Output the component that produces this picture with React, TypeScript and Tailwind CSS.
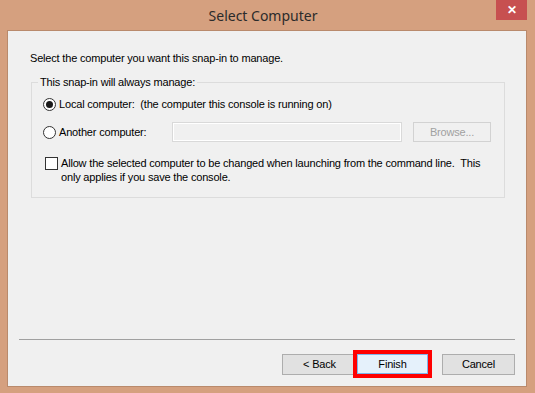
import React from 'react';

const font = { fontFamily: '"Liberation Sans", Arial, sans-serif' };

function Radio({ checked }: { checked?: boolean }) {
  return (
    <span className="flex h-[13px] w-[13px] shrink-0 items-center justify-center rounded-full border border-[#333333] bg-white">
      {checked && <span className="h-[7px] w-[7px] rounded-full bg-[#1a1a1a]" />}
    </span>
  );
}

export default function App() {
  return (
    <div
      className="relative h-[393px] w-[535px] overflow-hidden bg-[#d5a07f] text-[11px] tracking-[-0.18px] text-black"
      style={font}
    >
      {/* title bar */}
      <div className="flex h-[30px] w-[526px] items-center justify-center pt-[1px]">
        <span className="text-[14px] tracking-normal text-[#2b2b2b]" style={{ fontFamily: '"Noto Sans", sans-serif' }}>
          Select Computer
        </span>
      </div>
      <button className="absolute right-[8px] top-0 flex h-[20px] w-[31px] items-center justify-center bg-[#c75050] text-[12px] font-bold leading-none text-white">
        ✕
      </button>

      {/* client area */}
      <div className="ml-[7px] flex h-[357px] w-[520px] flex-col border border-[#b98a6c] bg-[#f0f0f0]">
        <p className="ml-[22px] mt-[19px] leading-[16px]">
          Select the computer you want this snap-in to manage.
        </p>

        <fieldset className="ml-[23px] mt-[8px] w-[474px] border border-[#dcdcdc] pb-[13px] pl-[11px]">
          <legend className="-ml-[5px] px-[2px] leading-[16px]">This snap-in will always manage:</legend>

          <label className="mt-[6px] flex h-[16px] items-center gap-[3px]">
            <Radio checked />
            <span>Local computer:&nbsp; (the computer this console is running on)</span>
          </label>

          <div className="mt-[10px] flex h-[20px] items-center">
            <label className="flex w-[129px] items-center gap-[3px]">
              <Radio />
              <span>Another computer:</span>
            </label>
            <div className="h-[20px] w-[230px] border border-[#d9d9d9] bg-[#f0f0f0] shadow-[inset_0_0_0_1px_#ffffff]" />
            <div className="ml-[11px] flex h-[20px] w-[78px] items-center justify-center border border-[#d2d2d2] bg-[#f0f0f0] text-[#a0a0a0]">
              Browse...
            </div>
          </div>

          <label className="mt-[14px] flex items-start gap-[3px] pl-[2px]">
            <span className="mt-[1px] h-[13px] w-[13px] shrink-0 border border-[#333333] bg-white" />
            <span className="whitespace-nowrap leading-[14px]">
              Allow the selected computer to be changed when launching from the command line.&nbsp; This
              <br />
              only applies if you save the console.
            </span>
          </label>
        </fieldset>

        <div className="flex-1" />

        <div className="mx-[11px] h-px bg-[#a0a0a0]" />

        <div className="mr-[11px] mt-[10px] mb-[8px] flex items-center justify-end">
          <button className="-mr-[4px] h-[21px] w-[75px] border border-[#adadad] bg-[#e1e1e1]">
            &lt; Back
          </button>
          <div className="relative z-10 flex h-[28px] w-[79px] items-center justify-center border-[4px] border-[#ff0000]">
            <button className="h-full w-full border border-[#7eb4ea] bg-[#e5f1fb]">Finish</button>
          </div>
          <button className="ml-[10px] h-[21px] w-[73px] border border-[#adadad] bg-[#e1e1e1]">
            Cancel
          </button>
        </div>
      </div>
    </div>
  );
}
